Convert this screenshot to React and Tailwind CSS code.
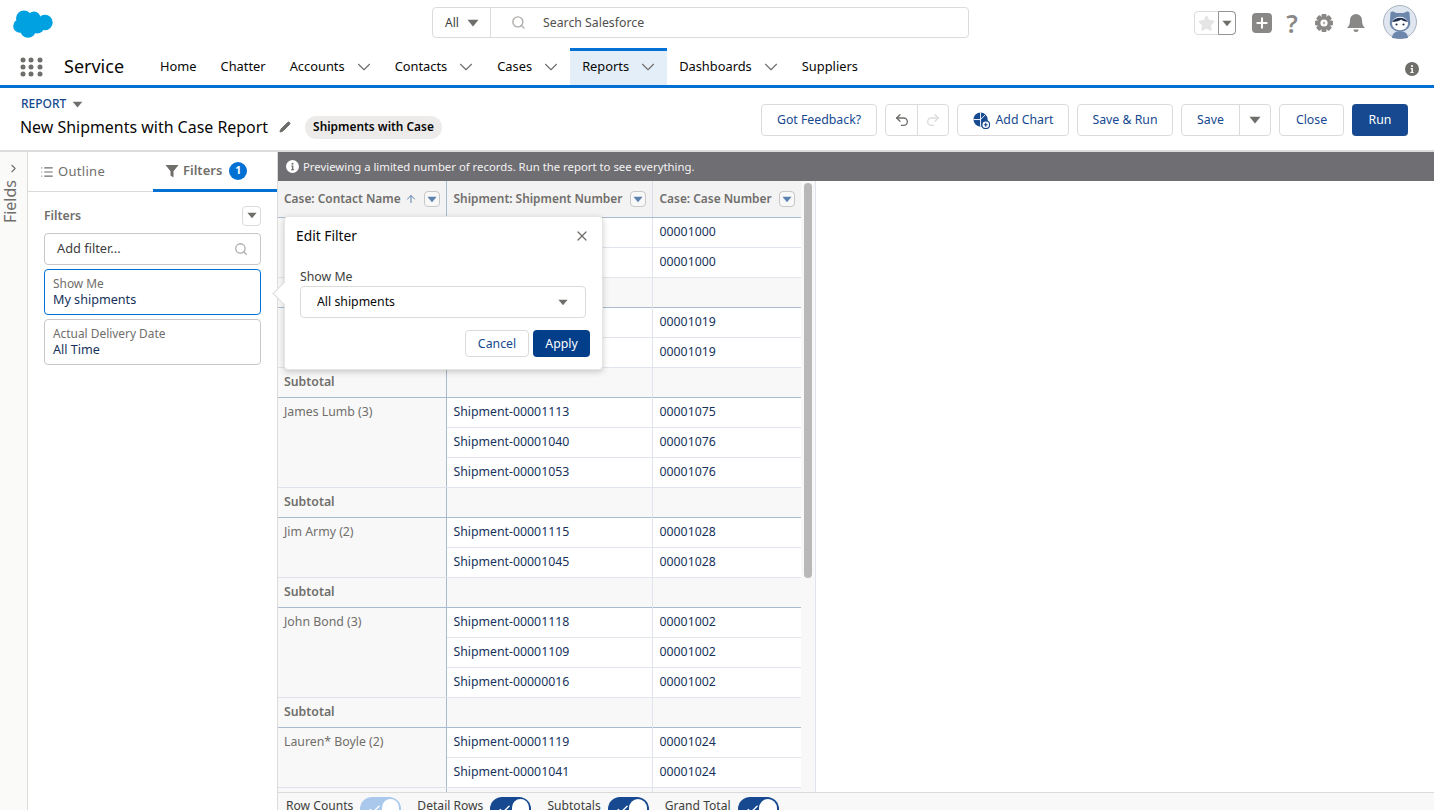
import { ChevronDown, ChevronRight, Search, X, Check, List, Pencil, Undo2, Redo2, Plus, ArrowUp, Star } from 'lucide-react';

const navItems = [
  { label: 'Home' },
  { label: 'Chatter' },
  { label: 'Accounts', menu: true },
  { label: 'Contacts', menu: true },
  { label: 'Cases', menu: true },
  { label: 'Reports', menu: true, active: true },
  { label: 'Dashboards', menu: true },
  { label: 'Suppliers' },
];

const groups = [
  { name: '', rows: [['', '00001000'], ['', '00001000']] },
  { name: '', rows: [['', '00001019'], ['', '00001019']] },
  { name: 'James Lumb (3)', rows: [['Shipment-00001113', '00001075'], ['Shipment-00001040', '00001076'], ['Shipment-00001053', '00001076']] },
  { name: 'Jim Army (2)', rows: [['Shipment-00001115', '00001028'], ['Shipment-00001045', '00001028']] },
  { name: 'John Bond (3)', rows: [['Shipment-00001118', '00001002'], ['Shipment-00001109', '00001002'], ['Shipment-00000016', '00001002']] },
  { name: 'Lauren* Boyle (2)', rows: [['Shipment-00001119', '00001024'], ['Shipment-00001041', '00001024']] },
];

const Caret = ({ className = '' }) => (
  <svg viewBox="0 0 12 8" className={className} fill="currentColor"><path d="M0.5 0.8h11L6 7.4z" /></svg>
);

const InfoDot = ({ size, bg, fg }) => (
  <svg viewBox="0 0 14 14" width={size} height={size} className="shrink-0">
    <circle cx="7" cy="7" r="7" fill={bg} />
    <circle cx="7" cy="4" r="1.1" fill={fg} />
    <path d="M5.6 6h2.3v4h.8v1H5.400v-1h1V7h-.8z" fill={fg} />
  </svg>
);

const Cloud = () => (
  <svg viewBox="0 0 40 28" className="w-10 h-7 text-[#00a1e0]" fill="currentColor">
    <circle cx="11" cy="8.500" r="8" />
    <circle cx="21" cy="8" r="6.500" />
    <circle cx="32" cy="12.500" r="7.700" />
    <circle cx="15" cy="20" r="7.800" />
    <circle cx="7" cy="16" r="6.800" />
    <circle cx="24" cy="16" r="7.500" />
  </svg>
);

const Gear = () => (
  <svg viewBox="0 0 20 20" className="w-5 h-5 text-[#8a8886]" fill="currentColor">
    {[0, 45, 90, 135].map((deg) => (
      <rect key={deg} x="7.500" y="1" width="5" height="18" rx="1" transform={`rotate(${deg} 10 10)`} />
    ))}
    <circle cx="10" cy="10" r="6.500" />
    <circle cx="10" cy="10" r="3.600" fill="#fff" />
    <path d="M10.500 7.500L8.600 10.400h1.500l-.6 2.100 1.900-2.900H9.900z" />
  </svg>
);

const Funnel = () => (
  <svg viewBox="0 0 14 14" className="w-3.5 h-3.5 text-[#706e6b]" fill="currentColor">
    <path d="M0.500 1h13L8.500 7.200V13.500L5.500 11.500V7.200z" />
  </svg>
);

const ChartPlus = () => (
  <svg viewBox="0 0 18 18" className="w-[17px] h-[17px]">
    <circle cx="8" cy="8" r="7.500" fill="#16498f" />
    <path d="M8 0.500V15.500M0.500 8H8L13.300 2.700" stroke="#fff" strokeWidth="1" fill="none" />
    <circle cx="13.500" cy="13.500" r="4.200" fill="#fff" stroke="#16498f" strokeWidth="1.400" />
    <path d="M13.500 11.500v4M11.500 13.500h4" stroke="#16498f" strokeWidth="1.200" />
  </svg>
);

const Avatar = () => (
  <svg viewBox="0 0 34 34" className="w-[34px] h-[34px]">
    <circle cx="17" cy="17" r="16.500" fill="#dfe6f0" stroke="#a9b2bf" />
    <path d="M7.500 7.500c1-1.500 3-1.500 5.500 0.500h8c2.500-2 4.500-2 5.500-0.500l0.500 8c1.500 6-3 11-10 11S5.500 21.500 7 15.500z" fill="#6d86ac" />
    <path d="M9 33c0-4 3-7 8-7s8 3 8 7c-5 1-11 1-16 0z" fill="#6d86ac" />
    <ellipse cx="17" cy="18.500" rx="8" ry="6.800" fill="#fff" />
    <path d="M9.200 17c1.800-3 4.800-4.300 7.800-4.300s6 1.300 7.800 4.300c-3-.5-5.300-1-6.500-2.400-2 1.500-5.300 2.400-9.100 2.400z" fill="#1f2f4d" />
    <circle cx="13.500" cy="19.500" r="1.100" fill="#1f2f4d" />
    <circle cx="20.500" cy="19.500" r="1.100" fill="#1f2f4d" />
  </svg>
);

const HeadBtn = ({ children, className = '' }) => (
  <button className={`h-8 flex items-center justify-center whitespace-nowrap bg-white border border-[#dddbda] rounded text-[12.3px] text-[#16498f] ${className}`}>
    {children}
  </button>
);

const ColHeader = ({ label, sorted, className }) => (
  <th className={`h-9 pt-px text-left font-semibold text-[11.9px] text-[#706e6b] bg-[#f3f3f3] border-b border-[#a9bbd0] ${className}`}>
    <div className="flex items-center justify-between">
      <span className="flex items-center whitespace-nowrap">
        {label}
        {sorted && <ArrowUp size={12} strokeWidth={2} className="ml-1 text-[#5b82ad]" />}
      </span>
      <span className="w-4 h-4 shrink-0 flex items-center justify-center bg-[#f8f8f8] border border-[#c9c7c5] rounded-sm text-[#5b82ad]">
        <Caret className="w-2.5 h-[7px]" />
      </span>
    </div>
  </th>
);

const Toggle = ({ label, muted }) => (
  <div className="flex items-start gap-[7px]">
    <span className="text-[12.1px] leading-[18px] text-[#3e3e3c] whitespace-nowrap">{label}</span>
    <span className={`w-[41px] h-6 shrink-0 rounded-full flex items-center justify-between pl-2 pr-0.5 ${muted ? 'bg-[#a9c8ec]' : 'bg-[#16498f]'}`}>
      <Check size={15} strokeWidth={2.5} className="text-white" />
      <span className="w-5 h-5 rounded-full bg-white" />
    </span>
  </div>
);

const FilterCard = ({ label, value, active }) => (
  <div className={`h-[46px] px-2 pt-[5px] bg-white rounded border ${active ? 'border-[#0070d2]' : 'border-[#c9c7c5]'}`}>
    <div className="text-[11.9px] leading-4 text-[#706e6b]">{label}</div>
    <div className="mt-px text-[12.6px] leading-[15px] text-[#16325c]">{value}</div>
  </div>
);

export default function App() {
  return (
    <div className="h-[810px] w-[1434px] overflow-hidden flex flex-col bg-white text-[#080707] font-['Noto_Sans','Open_Sans',sans-serif] text-[13px]">
      {/* Global header */}
      <header className="h-12 shrink-0 flex items-center relative">
        <div className="w-[432px] pl-[13px] shrink-0"><Cloud /></div>
        <div className="w-[537px] h-[31px] flex items-center border border-[#dddbda] rounded -mt-[3px]">
          <div className="w-[58px] h-full flex items-center gap-2 pl-3 border-r border-[#dddbda] text-[12px] text-[#3e3e3c]">
            All <Caret className="w-3 h-2 text-[#706e6b]" />
          </div>
          <Search size={15} strokeWidth={2.2} className="ml-5 text-[#b0adab]" />
          <span className="ml-[17px] pt-px text-[12.3px] text-[#514f4d]">Search Salesforce</span>
        </div>
        <div className="ml-[225px] flex items-center -mt-[2px]">
          <div className="w-[42px] h-6 flex border border-[#dddbda] rounded">
            <div className="w-6 flex items-center justify-center">
              <Star size={17} fill="#e5e5e5" stroke="#e5e5e5" />
            </div>
            <div className="w-[18px] -my-px -mr-px flex items-center justify-center border border-[#969492] rounded-r">
              <Caret className="w-2.5 h-[7px] text-[#706e6b]" />
            </div>
          </div>
          <div className="ml-4 w-5 h-5 flex items-center justify-center bg-[#8a8886] rounded">
            <Plus size={16} strokeWidth={3} className="text-white" />
          </div>
          <span className="ml-3.5 w-[12px] flex justify-center text-[25px] leading-6 font-semibold text-[#8a8886]">?</span>
          <div className="ml-[16px]"><Gear /></div>
          <svg viewBox="0 0 20 20" className="ml-3 w-5 h-5 text-[#8a8886]" fill="currentColor">
            <path d="M10 1a6 6 0 0 1 6 6c0 4 1 6 3 8H1c2-2 3-4 3-8a6 6 0 0 1 6-6z" />
            <path d="M7.500 16.500h5a2.500 2.500 0 0 1-5 0z" />
          </svg>
          <div className="ml-[17px] -mt-[2px]"><Avatar /></div>
        </div>
      </header>

      {/* App nav */}
      <nav className="h-10 shrink-0 flex items-stretch border-b-[3px] border-[#0070d2] relative">
        <div className="w-[148px] shrink-0 flex items-center pl-[21px]">
          <div className="grid grid-cols-3 gap-[3px] w-[22px]">
            {Array.from({ length: 9 }).map((_, i) => (
              <span key={i} className="w-1 h-1 rounded-full bg-[#706e6b] scale-125" />
            ))}
          </div>
          <span className="ml-[21px] text-[18px] text-[#080707]">Service</span>
        </div>
        {navItems.map((item) => (
          <div
            key={item.label}
            className={`flex items-center px-3 pb-0.5 border-t-[3px] ${item.active ? 'bg-[#e3eef9] border-[#0070d2]' : 'border-transparent'}`}
          >
            <span className="text-[12.85px]">{item.label}</span>
            {item.menu && <ChevronDown size={22} strokeWidth={1.200} className="ml-2 -mr-1 text-[#706e6b]" />}
          </div>
        ))}
        <div className="absolute right-[15px] top-[14px]"><InfoDot size={14} bg="#706e6b" fg="#fff" /></div>
      </nav>

      {/* Page header */}
      <div className="h-[64px] shrink-0 flex items-start justify-between pl-5 pr-[26px] border-b-2 border-[#dddbda]">
        <div className="pt-[8px]">
          <div className="pl-px flex items-center gap-1.5 text-[12px] leading-4 text-[#16498f] font-medium">
            REPORT <Caret className="w-[11px] h-[7px] text-[#706e6b]" />
          </div>
          <div className="mt-[3px] flex items-center">
            <h1 className="text-[15.95px] leading-6 font-normal">New Shipments with Case Report</h1>
            <Pencil size={12} fill="#706e6b" className="ml-[11px] text-[#706e6b]" />
            <span className="ml-[14px] h-[23px] px-2 flex items-center rounded-full bg-[#ecebea] text-[11.9px] font-semibold whitespace-nowrap">Shipments with Case</span>
          </div>
        </div>
        <div className="flex items-center gap-2 pt-4">
          <HeadBtn className="w-[116px]">Got Feedback?</HeadBtn>
          <div className="h-8 w-16 flex border border-[#dddbda] rounded">
            <div className="w-8 flex items-center justify-center border-r border-[#dddbda]"><Undo2 size={16} className="text-[#706e6b]" /></div>
            <div className="flex-1 flex items-center justify-center"><Redo2 size={16} className="text-[#dddbda]" /></div>
          </div>
          <HeadBtn className="w-[112px] gap-1.5"><ChartPlus /> Add Chart</HeadBtn>
          <HeadBtn className="w-24">Save &amp; Run</HeadBtn>
          <div className="h-8 w-[90px] flex border border-[#dddbda] rounded text-[12.3px] text-[#16498f]">
            <div className="w-[58px] flex items-center justify-center border-r border-[#dddbda]">Save</div>
            <div className="flex-1 flex items-center justify-center"><Caret className="w-3 h-2 text-[#706e6b]" /></div>
          </div>
          <HeadBtn className="w-[65px]">Close</HeadBtn>
          <button className="h-8 w-14 bg-[#16498f] rounded text-[12.3px] text-white">Run</button>
        </div>
      </div>

      {/* Builder body */}
      <div className="flex-1 min-h-0 flex">
        {/* Fields rail */}
        <aside className="w-7 shrink-0 bg-[#fafaf9] border-r border-[#dddbda] flex flex-col items-center pt-2.5 text-[#706e6b]">
          <ChevronRight size={13} />
          <span className="mt-[5px] mr-[8px] text-[16px] leading-4 [writing-mode:vertical-rl] rotate-180">Fields</span>
        </aside>

        {/* Filters panel */}
        <section className="w-[250px] shrink-0 border-r border-[#dddbda]">
          <div className="h-10 flex border-b border-[#dddbda]">
            <div className="w-[125px] flex items-center gap-1 pl-3 text-[13px] tracking-[0.3px] text-[#706e6b]">
              <List size={14} /> Outline
            </div>
            <div className="flex-1 -mb-px pl-3 flex items-center gap-1 border-b-[3px] border-[#0070d2] text-[13px] font-semibold text-[#706e6b]">
              <Funnel />
              <span className="pt-px">Filters</span>
              <span className="ml-[3px] w-[18px] h-[18px] rounded-full bg-[#0070d2] text-white text-[10.5px] font-bold flex items-center justify-center">1</span>
            </div>
          </div>
          <div className="pl-4 pr-4">
            <div className="mt-[14px] h-5 flex items-center justify-between">
              <span className="text-[12.3px] font-semibold text-[#706e6b]">Filters</span>
              <span className="w-[19px] h-5 -mt-px flex items-center justify-center border border-[#dddbda] rounded">
                <Caret className="w-2.5 h-[7px] text-[#706e6b]" />
              </span>
            </div>
            <div className="mt-[7px] h-8 flex items-center justify-between pl-3 pr-[18px] border border-[#c9c7c5] rounded">
              <span className="text-[12.8px] text-[#3e3e3c]">Add filter...</span>
              <Search size={14} strokeWidth={2.2} className="-mr-1.5 text-[#b0adab]" />
            </div>
            <div className="mt-1 flex flex-col gap-1">
              <FilterCard label="Show Me" value="My shipments" active />
              <FilterCard label="Actual Delivery Date" value="All Time" />
            </div>
          </div>
        </section>

        {/* Report preview */}
        <main className="flex-1 min-w-0 flex flex-col relative">
          <div className="h-[29px] shrink-0 flex items-center gap-1 pl-2 bg-[#6f6e72] text-[11.35px] text-[#f3f2f2]">
            <InfoDot size={13} bg="#fff" fg="#6f6e72" /> Previewing a limited number of records. Run the report to see everything.
          </div>
          <div className="flex-1 min-h-0 flex overflow-hidden">
            <table className="w-[523px] h-fit table-fixed border-collapse text-[12.3px] shrink-0">
              <thead>
                <tr>
                  <ColHeader label="Case: Contact Name" sorted className="w-[168px] pl-1.5 pr-1.5 border-r border-r-[#a9bbd0]" />
                  <ColHeader label="Shipment: Shipment Number" className="w-[206px] pl-[7px] pr-1.5 border-r border-r-[#d8dde6]" />
                  <ColHeader label="Case: Case Number" className="w-[149px] pl-[7px] pr-1.5" />
                </tr>
              </thead>
              {groups.map((g, gi) => (
                <tbody key={gi}>
                  {g.rows.map((r, ri) => (
                    <tr key={ri} className="h-[30px]">
                      {ri === 0 && (
                        <td rowSpan={g.rows.length} className="align-top px-1.5 pt-[5px] bg-[#f8f8f8] border-r border-b border-r-[#a9bbd0] border-b-[#dfe3ec] text-[#706e6b] leading-[18px]">{g.name}</td>
                      )}
                      <td className="pl-[7px] pr-1.5 text-[#16325c] border-r border-b border-[#e0e4ec]">{r[0]}</td>
                      <td className="pl-[7px] pr-1.5 text-[#16325c] border-b border-[#e0e4ec]">{r[1]}</td>
                    </tr>
                  ))}
                  <tr className="h-[30px] bg-[#f8f8f8] border-b border-[#a9bbd0]">
                    <td className="px-1.5 pt-px font-semibold text-[#706e6b] border-r border-[#a9bbd0]">Subtotal</td>
                    <td className="border-r border-[#e0e4ec]" />
                    <td />
                  </tr>
                </tbody>
              ))}
            </table>
            <div className="w-[15px] shrink-0 bg-[#f8f8f8] border-r border-[#e0e4ec] pt-0.5 pl-[3px]">
              <div className="w-2 h-[395px] rounded-full bg-[#b8b8b8]" />
            </div>
          </div>
          <div className="h-[18px] shrink-0 overflow-hidden border-t border-[#dddbda] bg-[#f8f8f8] flex items-start gap-4 pl-2 pt-1">
            <Toggle label="Row Counts" muted />
            <Toggle label="Detail Rows" />
            <Toggle label="Subtotals" />
            <Toggle label="Grand Total" />
          </div>

          {/* Edit filter popover */}
          <div className="absolute left-[6px] top-[64px] w-[319px] h-[154px] bg-white rounded border border-[#e5e5e5] shadow-[0_2px_6px_rgba(0,0,0,0.2)]">
            <span className="absolute -left-[9px] top-[68px] w-[17px] h-[17px] rotate-45 bg-white border-l border-b border-[#dddbda]" />
            <div className="relative pl-[11px] pr-[12px] pt-[9px]">
              <div className="flex items-center justify-between">
                <span className="text-[13.8px] leading-5">Edit Filter</span>
                <X size={16} strokeWidth={1.800} className="text-[#706e6b]" />
              </div>
              <div className="mt-[23px] pl-1 pr-[4px]">
                <div className="text-[12.3px] leading-4 text-[#3e3e3c]">Show Me</div>
                <div className="mt-[1px] h-8 flex items-center justify-between pl-4 pr-[17px] border border-[#dddbda] rounded text-[12.3px]">
                  All shipments
                  <Caret className="w-2.5 h-[7px] text-[#706e6b]" />
                </div>
              </div>
              <div className="mt-3 flex justify-end gap-1">
                <button className="w-16 h-[27px] pt-px bg-white border border-[#dddbda] rounded text-[12.3px] text-[#16498f]">Cancel</button>
                <button className="w-[57px] h-[27px] pt-px bg-[#023e8a] rounded text-[12.3px] text-white">Apply</button>
              </div>
            </div>
          </div>
        </main>
      </div>
    </div>
  );
}
